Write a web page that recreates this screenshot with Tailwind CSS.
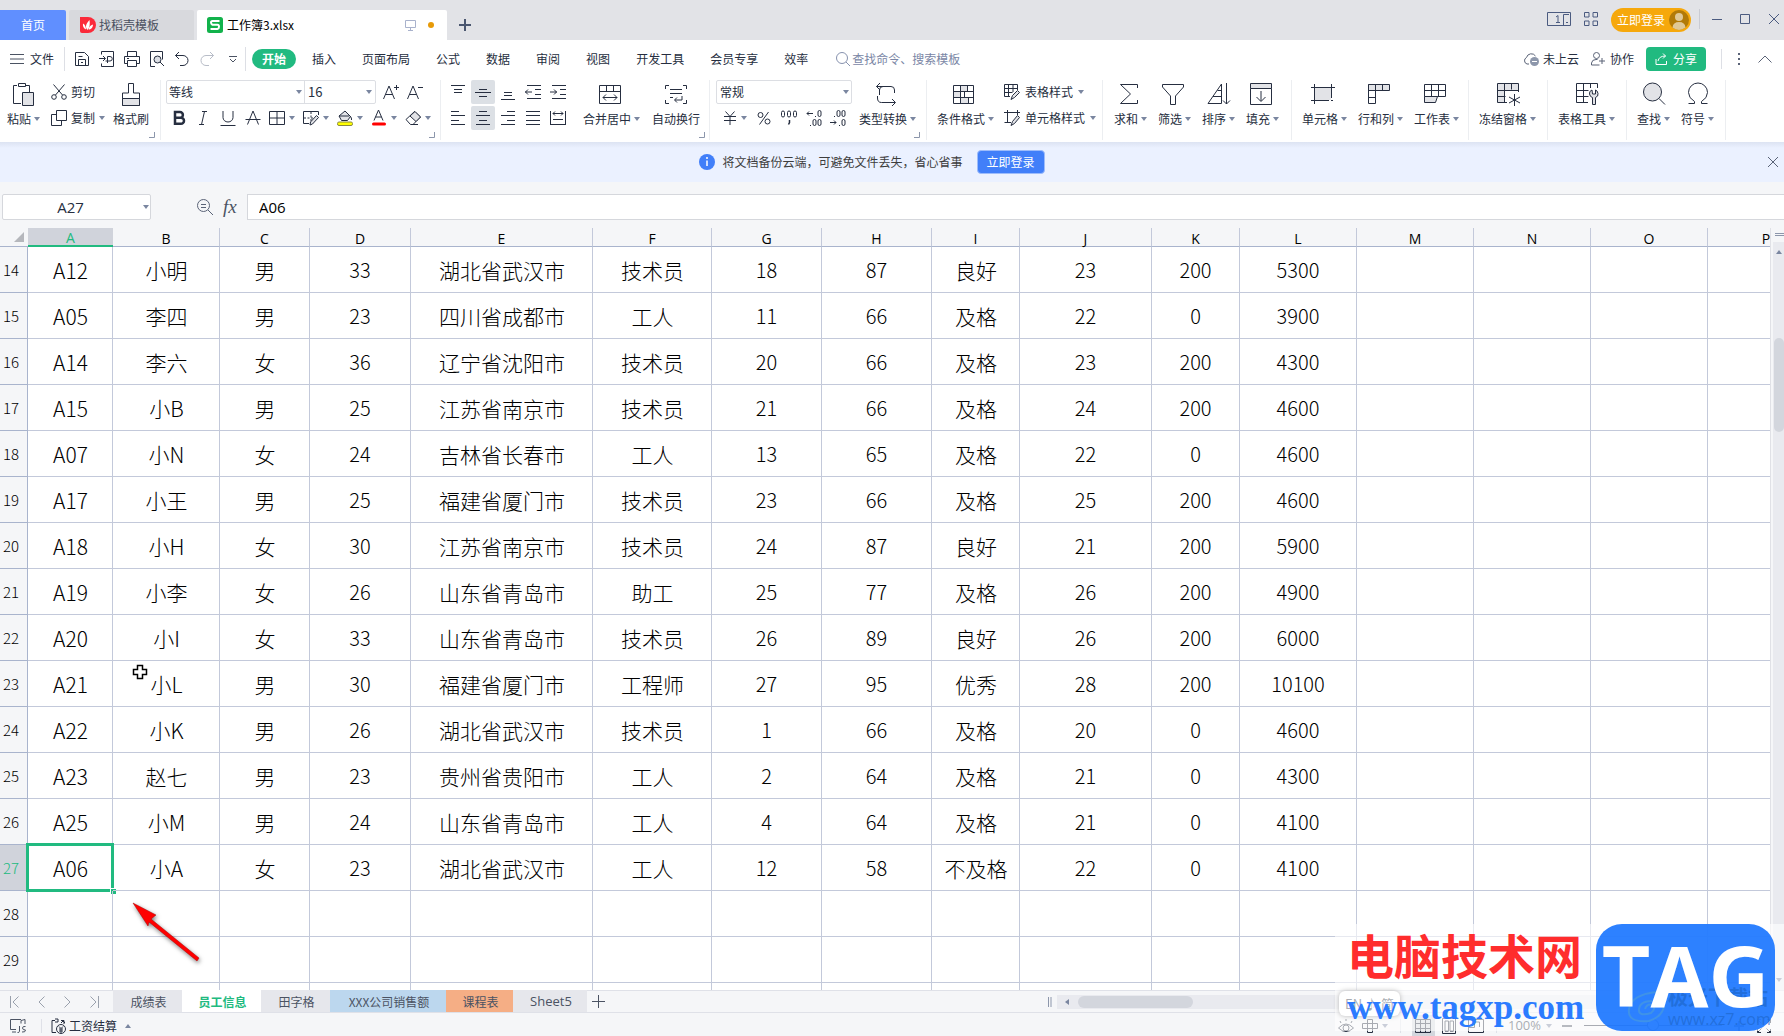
<!DOCTYPE html>
<html lang="zh-CN">
<head>
  <meta charset="UTF-8" />
  <meta name="viewport" content="width=device-width, initial-scale=1.0" />
  <title>工作簿3.xlsx</title>
  <script src="https://cdn.jsdelivr.net/npm/@tailwindcss/browser@4"></script>
</head>
<body class="h-screen overflow-hidden flex flex-col bg-[#f5f6f8] font-['Noto_Sans_CJK_SC',sans-serif] text-xs text-[#262e40]">

  <!-- Shared icons -->
  <svg class="hidden">
    <symbol id="caret" viewBox="0 0 6 4"><path d="M0 0h6L3 4z" fill="#7a86a0" /></symbol>
    <symbol id="corner" viewBox="0 0 6 6"><path d="M5.500 0v5.500H0" fill="none" stroke="#8c96ab" /></symbol>
  </svg>

  <!-- Title bar -->
  <header class="h-10 shrink-0 flex items-end bg-[#e2e3e7]">
    <a href="#" class="w-[66px] h-[30px] flex items-center justify-center rounded-tr-xs bg-[#608fff] text-white">首页</a>
    <a href="#" class="w-[125px] h-[30px] ml-[3px] flex items-center pl-[11px] gap-[3px] rounded-t-xs bg-[#d8d9dd] text-[#4a5060]">
      <svg class="size-4" viewBox="0 0 16 16"><path d="M0 0h8a8 8 0 0 1 0 16H2a2 2 0 0 1-2-2z" fill="#fb2a3a" /><path d="M7.500 13C4.500 10 6.500 6 9.500 3c.5 4 .5 7-2 10zM6 12.500C3.500 11.500 2.500 9 3 6.500c2 1 3 3.500 3 6zM8.500 12.500c2.500 0 4.500-2 4.500-5-2.500.5-4 2.500-4.500 5z" fill="#fff" /></svg>
      找稻壳模板
    </a>
    <a href="#" class="w-[250px] h-[30px] ml-[3px] flex items-center pl-[10px] rounded-t-xs bg-white text-black">
      <svg class="size-4 mr-1" viewBox="0 0 16 16"><rect width="16" height="16" rx="2.500" fill="#12b24b" /><path d="M12.500 4H5.500Q4 4 4 5.500T5.500 7.800h5Q12 7.800 12 9.800T10.500 12H3.500" fill="none" stroke="#fff" stroke-width="2" /></svg>
      <span>工作簿3.xlsx</span>
      <svg class="w-[11px] h-[11px] ml-auto" viewBox="0 0 11 11" fill="none" stroke="#a9b2cc"><path d="M.5.5h10v7H.5zM5.500 7.500v3M3 10.500h5" /></svg>
      <span class="size-[6px] rounded-full bg-[#e79a08] ml-3 mr-[13px]"></span>
    </a>
    <button aria-label="新建" class="h-[30px] ml-3"><svg class="size-3" viewBox="0 0 12 12" stroke="#4b5770" stroke-width="2"><path d="M6 0v12M0 6h12" /></svg></button>
    <div class="ml-auto h-[38px] self-start flex items-center pr-[5px] text-[#4b5b80]">
      <svg class="w-6 h-[14px] mr-[13px]" viewBox="0 0 24 14" fill="none" stroke="currentColor"><path d="M.5.500h23v13H.5zM22 2.500h-5.500v11M19 10.500h2M9 5l2-1.500v7M9 10.500h4" /></svg>
      <svg class="w-[14px] h-[14px] mr-[13px]" viewBox="0 0 14 14" fill="none" stroke="currentColor"><path d="M.5.500h4.500v4.500H.5zM9 .5h4.500v4.500H9zM.5 9h4.500v4.500H.5zM9 9h4.500v4.500H9z" /></svg>
      <button class="h-6 mt-[2px] pl-[6px] pr-[2px] flex items-center gap-1 rounded-full bg-[#f6a80c] text-white">立即登录
        <svg class="size-5" viewBox="0 0 20 20"><circle cx="10" cy="10" r="10" fill="#b27a08" /><circle cx="10" cy="7" r="4" fill="#e0c896" /><path d="M3.500 17.500Q4 12 10 12t6.500 5.500A10 10 0 0 1 3.500 17.500z" fill="#e0c896" /></svg>
      </button>
      <span class="w-px h-5 ml-2 mr-3 bg-[#c9cbd3]"></span>
      <button aria-label="最小化"><svg class="size-[10px]" viewBox="0 0 10 10" stroke="currentColor"><path d="M0 5.500h10" /></svg></button>
      <button aria-label="最大化" class="ml-[18px]"><svg class="size-[10px]" viewBox="0 0 10 10" fill="none" stroke="currentColor"><path d="M.5.500h9v9h-9z" /></svg></button>
      <button aria-label="关闭" class="ml-[19px]"><svg class="size-[10px]" viewBox="0 0 10 10" stroke="currentColor"><path d="M0 0l10 10M10 0L0 10" /></svg></button>
    </div>
  </header>

  <!-- Menu row -->
  <nav class="h-[38px] shrink-0 flex items-center bg-white pl-[10px] pr-3">
    <button class="flex items-center gap-[6px]">
      <svg class="w-[14px] h-[10px]" viewBox="0 0 14 10" stroke="#4b5363"><path d="M0 .5h14M0 5h14M0 9.500h14" /></svg>文件
    </button>
    <span class="w-px h-6 ml-[10px] mr-2 bg-[#dddfe5]"></span>
    <div class="flex items-center gap-[9px] pl-px">
      <svg class="size-4" viewBox="0 0 16 16" fill="none" stroke="#262e40"><path d="M1.500 1.500h9L14.500 5.500v9h-13zM4.500 14.500V8.500h7v6M4.500 5.500h4M7 11.500h2" /></svg>
      <svg class="size-4" viewBox="0 0 16 16" fill="none" stroke="#262e40"><path d="M2.500 3.500v-3h12v15h-12v-3M0 7.500h6M4 5l2.500 2.500L4 10M8.500 12V5.500H11a2 2 0 0 1 0 4.500H6.500" /></svg>
      <svg class="size-4" viewBox="0 0 16 16" fill="none" stroke="#262e40"><path d="M3.500 5V.5h9V5M3.500 12.500h-3v-7h15v7h-3M3.500 9.500h9v6h-9zM3 7.500h2" /></svg>
      <svg class="size-4" viewBox="0 0 16 16" fill="none" stroke="#262e40"><path d="M6 15.500H1.500V.5h12v8" /><circle cx="8.500" cy="8.500" r="3.500" fill="#dcdfe5" /><path d="M11 11l4 4" /></svg>
      <svg class="size-4" viewBox="0 0 16 16" fill="none" stroke="#262e40"><path d="M5 1L1.500 4.500 5 8M1.500 4.500H9a5 5 0 0 1 0 10H6" /></svg>
      <svg class="size-4" viewBox="0 0 16 16" fill="none" stroke="#b8bdc8"><path d="M11 1l3.500 3.500L11 8M14.500 4.500H7a5 5 0 0 0 0 10h3" /></svg>
      <svg class="w-2 h-[7px] ml-[5px]" viewBox="0 0 8 7" fill="none" stroke="#4b5363"><path d="M0 .5h8M1 3l3 3 3-3" /></svg>
    </div>
    <span class="w-px h-6 ml-2 mr-[6px] bg-[#dddfe5]"></span>
    <div class="flex items-center gap-[6px]">
      <a href="#" class="h-5 px-[10px] flex items-center rounded-full bg-[#21ba80] text-white font-bold">开始</a>
      <a href="#" class="px-[10px]">插入</a>
      <a href="#" class="px-[10px]">页面布局</a>
      <a href="#" class="px-[10px]">公式</a>
      <a href="#" class="px-[10px]">数据</a>
      <a href="#" class="px-[10px]">审阅</a>
      <a href="#" class="px-[10px]">视图</a>
      <a href="#" class="px-[10px]">开发工具</a>
      <a href="#" class="px-[10px]">会员专享</a>
      <a href="#" class="px-[10px]">效率</a>
    </div>
    <label class="flex items-center gap-[2px] ml-[18px]">
      <svg class="w-[14px] h-[14px]" viewBox="0 0 14 14" fill="none" stroke="#8792ae"><circle cx="6" cy="6" r="5.500" /><path d="M10 10l4 4" /></svg>
      <input type="text" aria-label="查找命令" placeholder="查找命令、搜索模板" class="w-32 outline-none placeholder:text-[#7a86a5]" />
    </label>
    <div class="ml-auto flex items-center">
      <button class="flex items-center gap-[4px]">
        <svg class="size-4" viewBox="0 0 16 16" fill="none" stroke="#5a6377"><path d="M6 13H4a3.500 3.500 0 0 1-.5-6.500 5 5 0 0 1 9-1.500" /><circle cx="11.500" cy="10.500" r="4.500" fill="#8d97ab" stroke="none" /><path d="M9 10.500h5" stroke="#fff" /></svg>未上云
      </button>
      <button class="flex items-center gap-[5px] ml-3">
        <svg class="w-[14px] h-[14px]" viewBox="0 0 14 14" fill="none" stroke="#5a6377"><circle cx="5.500" cy="3.500" r="3" /><path d="M8.500 13H.5V11Q1 7.500 5 7.500h1.500M11 6v6M8 9h6" /></svg>协作
      </button>
      <button class="h-6 px-[9px] ml-3 flex items-center gap-[6px] rounded bg-[#21ba80] text-white">
        <svg class="w-3 h-3" viewBox="0 0 12 12" fill="none" stroke="#fff"><path d="M1 6v5.500h10.500V8M3 8q1-5 7.500-5M8 .5L10.500 3 8 5.500" /></svg>分享
      </button>
      <span class="w-px h-5 ml-[15px] mr-4 bg-[#dddfe5]"></span>
      <svg class="w-[2px] h-3 mr-[18px]" viewBox="0 0 2 12" fill="#5a6377"><path d="M0 0h2v2H0zM0 5h2v2H0zM0 10h2v2H0z" /></svg>
      <svg class="w-[14px] h-2" viewBox="0 0 14 8" fill="none" stroke="#5a6377"><path d="M.5 7.500L7 1l6.500 6.500" /></svg>
    </div>
  </nav>

  <!-- Ribbon -->
  <section class="h-16 shrink-0 flex bg-white pt-[2px] pb-[2px] leading-4 whitespace-nowrap">
    <div class="relative w-[161px] shrink-0 flex pl-[7px] border-r border-[#eceef1]">
      <button class="w-8 pt-[2px] flex flex-col items-start gap-[5px]">
        <svg class="size-6 ml-1" viewBox="0 0 24 24" fill="none" stroke="#262e40"><path d="M10 21.500H2.500V3.500H6M15 3.500h3.500V10" /><path d="M7.500 1.500h7v3h-7z" /><path d="M11.500 10.500h11v13h-11z" fill="#e2e3e7" /></svg>
        <span class="flex items-center gap-[3px]">粘贴<svg class="w-[6px] h-1"><use href="#caret" /></svg></span>
      </button>
      <div class="flex flex-col gap-[2px] ml-3">
        <button class="h-6 flex items-center gap-[4px]"><svg class="size-4" viewBox="0 0 16 16" fill="none" stroke="#262e40"><path d="M2.500.5l9 10.500M13.500.5l-9 10.500" /><circle cx="3" cy="13" r="2.300" /><circle cx="13" cy="13" r="2.300" /></svg>剪切</button>
        <button class="h-6 flex items-center gap-[4px]"><svg class="size-4" viewBox="0 0 16 16" fill="none" stroke="#262e40"><path d="M5.500.5h10v10h-10zM5 4.500H.5v11h10V11" /></svg>复制<svg class="w-[6px] h-1"><use href="#caret" /></svg></button>
      </div>
      <button class="pt-[2px] ml-[8px] flex flex-col items-center gap-[5px]">
        <svg class="size-6" viewBox="0 0 24 24" fill="none" stroke="#262e40"><path d="M9.500 11V1.500h5V11h6v12.500h-17V11z" /><path d="M3.500 16.500h17v7h-17z" fill="#e2e3e7" /></svg>
        <span>格式刷</span>
      </button>
      <svg class="absolute right-[5px] bottom-[2px] size-[6px]"><use href="#corner" /></svg>
    </div>

    <div class="relative w-[280px] shrink-0 pl-[5px] flex flex-col gap-[2px] border-r border-[#eceef1]">
      <div class="h-6 flex items-center">
        <div class="relative flex h-6 items-center rounded-xs border border-[#dcdee3]">
          <select aria-label="字体" class="w-[138px] h-full appearance-none pl-[2px] border-r border-[#dcdee3]"><option>等线</option></select>
          <select aria-label="字号" class="w-[70px] h-full appearance-none pl-[3px] text-[13px]"><option>16</option></select>
          <svg class="absolute left-[129px] w-[6px] h-1"><use href="#caret" /></svg>
          <svg class="absolute right-[3px] w-[6px] h-1"><use href="#caret" /></svg>
        </div>
        <svg class="size-4 ml-[7px]" viewBox="0 0 16 16" fill="none" stroke="#262e40"><path d="M.5 15L6 2l5.500 13M2.500 10.500h7M11 3.500h5M13.500 1v5" /></svg>
        <svg class="size-4 ml-2" viewBox="0 0 16 16" fill="none" stroke="#262e40"><path d="M.5 15L6 2l5.500 13M2.500 10.500h7M11 3.500h5" /></svg>
      </div>
      <div class="h-6 flex items-center">
        <button aria-label="加粗" class="w-[25px] flex justify-center"><svg class="size-4" viewBox="0 0 16 16" fill="none" stroke="#262e40" stroke-width="2.500"><path d="M4 2h5a2.800 2.800 0 0 1 0 5.800H4zM4 7.800h6a3 3 0 0 1 0 6H4z" /></svg></button>
        <button aria-label="倾斜" class="w-[24px] flex justify-center"><svg class="size-4" viewBox="0 0 16 16" fill="none" stroke="#262e40"><path d="M7 1.500h5M4 14.500h5M9.500 1.500l-3 13" /></svg></button>
        <button aria-label="下划线" class="w-[25px] flex justify-center"><svg class="size-4" viewBox="0 0 16 16" fill="none" stroke="#262e40"><path d="M3 1v6.500a5 4.500 0 0 0 10 0V1M.5 15.500h15" /></svg></button>
        <button aria-label="删除线" class="w-[25px] flex justify-center"><svg class="size-4" viewBox="0 0 16 16" fill="none" stroke="#262e40"><path d="M2.500 14.500L8 1l5.500 13.500M.5 9.500h15" /></svg></button>
        <button aria-label="边框" class="w-[34px] flex items-center gap-[4px] pl-1"><svg class="size-4" viewBox="0 0 16 16" fill="none" stroke="#262e40"><path d="M.5 1.500h15v13H.5zM8 1.500v13M.5 8h15" /></svg><svg class="w-[6px] h-1"><use href="#caret" /></svg></button>
        <button aria-label="绘图边框" class="w-[34px] flex items-center gap-[4px] pl-1"><svg class="size-4" viewBox="0 0 16 16" fill="none" stroke="#262e40"><path d="M6 13.500H.5v-12h15V5" /><path d="M8 2v12M1 8h9" stroke-dasharray="2 1.500" /><path d="M13.500 5.500l2 2-6 6.500-2.500 1 .5-3z" fill="#e2e3e7" /></svg><svg class="w-[6px] h-1"><use href="#caret" /></svg></button>
        <button aria-label="填充颜色" class="w-[34px] flex items-center gap-[4px] pl-1"><svg class="size-4" viewBox="0 0 16 16" fill="none" stroke="#262e40"><path d="M2 6l6-5 5.500 5.500-3 4h-6z" fill="#e2e3e7" /><path d="M2 6h10M13 6q2 2 1.500 4" /><rect x=".5" y="12" width="15" height="3.500" rx="1.500" fill="#ff0" stroke="#8a8a40" /></svg><svg class="w-[6px] h-1"><use href="#caret" /></svg></button>
        <button aria-label="字体颜色" class="w-[34px] flex items-center gap-[4px] pl-1"><svg class="size-4" viewBox="0 0 16 16" fill="none" stroke="#262e40"><path d="M3 10.500L7.500 0 12 10.500M4.500 7h6" /><rect x="1" y="12.500" width="14" height="3" rx="1.500" fill="red" stroke="none" /></svg><svg class="w-[6px] h-1"><use href="#caret" /></svg></button>
        <button aria-label="清除" class="w-[34px] flex items-center gap-[4px] pl-1"><svg class="size-4" viewBox="0 0 16 16" fill="none" stroke="#262e40"><path d="M1 9.500L9.500 1.500l6 5.500L8 14.500H5.500z" /><path d="M5 6l5-4.500 5.500 5.500-4.500 4.500z" fill="#e2e3e7" /><path d="M8 14.500h5" /></svg><svg class="w-[6px] h-1"><use href="#caret" /></svg></button>
      </div>
      <svg class="absolute right-[5px] bottom-[2px] size-[6px]"><use href="#corner" /></svg>
    </div>

    <div class="relative w-[269px] shrink-0 flex pl-[5px] border-r border-[#eceef1]">
      <div class="grid grid-cols-5 gap-x-px gap-y-[2px] content-start">
        <button aria-label="顶端对齐" class="size-6 grid place-items-center"><svg class="size-4" viewBox="0 0 16 16" stroke="#262e40"><path d="M1 1.500h14M4 5.500h8M4 8.500h8" /></svg></button>
        <button aria-label="垂直居中" class="size-6 grid place-items-center rounded-xs bg-[#dce0e5]"><svg class="size-4" viewBox="0 0 16 16" stroke="#262e40"><path d="M4 5.500h8M0 8.500h16M4 12.500h8" /></svg></button>
        <button aria-label="底端对齐" class="size-6 grid place-items-center"><svg class="size-4" viewBox="0 0 16 16" stroke="#262e40"><path d="M4 8.500h8M4 11.500h8M1 15.500h14" /></svg></button>
        <button aria-label="减少缩进" class="size-6 grid place-items-center"><svg class="size-4" viewBox="0 0 16 16" fill="none" stroke="#262e40"><path d="M2 1.500h14M10 5.500h6M10 10.500h6M2 14.500h14M0 8h7M3 5.500L.5 8 3 10.500" /></svg></button>
        <button aria-label="增加缩进" class="size-6 grid place-items-center"><svg class="size-4" viewBox="0 0 16 16" fill="none" stroke="#262e40"><path d="M2 1.500h14M10 5.500h6M10 10.500h6M2 14.500h14M0 8h7M4 5.500L6.500 8 4 10.500" /></svg></button>
        <button aria-label="左对齐" class="size-6 grid place-items-center"><svg class="size-4" viewBox="0 0 16 16" stroke="#262e40"><path d="M1 1.500h8M1 5.500h14M1 10.500h8M1 14.500h14" /></svg></button>
        <button aria-label="水平居中" class="size-6 grid place-items-center rounded-xs bg-[#dce0e5]"><svg class="size-4" viewBox="0 0 16 16" stroke="#262e40"><path d="M4 1.500h8M1 5.500h14M4 10.500h8M1 14.500h14" /></svg></button>
        <button aria-label="右对齐" class="size-6 grid place-items-center"><svg class="size-4" viewBox="0 0 16 16" stroke="#262e40"><path d="M7 1.500h8M1 5.500h14M7 10.500h8M1 14.500h14" /></svg></button>
        <button aria-label="两端对齐" class="size-6 grid place-items-center"><svg class="size-4" viewBox="0 0 16 16" stroke="#262e40"><path d="M1 1.500h14M1 5.500h14M1 10.500h14M1 14.500h14" /></svg></button>
        <button aria-label="分散对齐" class="size-6 grid place-items-center"><svg class="size-4" viewBox="0 0 16 16" fill="none" stroke="#262e40"><path d="M.5 1v14M15.500 1v14M3 3.500h10M5 1.500l-2 2 2 2M11 1.500l2 2-2 2M3 9.500h10M0 14.500h16" /></svg></button>
      </div>
      <button class="pt-[2px] ml-[13px] flex flex-col items-center gap-[5px]">
        <svg class="size-6 mr-[3px]" viewBox="0 0 24 24" fill="none" stroke="#262e40"><path d="M1.500 3.500h21v18h-21zM1.500 9.500h21M8.500 3.500v6M15.500 3.500v6M5 15.500h14M8 12.500l-3 3 3 3M16 12.500l3 3-3 3" /></svg>
        <span class="flex items-center gap-[3px]">合并居中<svg class="w-[6px] h-1"><use href="#caret" /></svg></span>
      </button>
      <button class="pt-[2px] ml-3 flex flex-col items-center gap-[5px]">
        <svg class="size-6" viewBox="0 0 24 24" fill="none" stroke="#262e40"><path d="M5 3.500H1.500V7M19 3.500h3.500V7M5 21.500H1.500V18M19 21.500h3.500V18M6 7.500h12M6 11.500h12M6 15.500h3M18 14v4h-7M13 15.500L10.500 18l2.500 2.500" /></svg>
        <span>自动换行</span>
      </button>
      <svg class="absolute right-1 bottom-[2px] size-[6px]"><use href="#corner" /></svg>
    </div>

    <div class="relative w-[217px] shrink-0 flex pl-[6px] border-r border-[#eceef1]">
      <div class="flex flex-col gap-[2px]">
        <div class="relative flex items-center">
          <select aria-label="数字格式" class="w-[136px] h-6 appearance-none pl-[3px] rounded-xs border border-[#dcdee3]"><option>常规</option></select>
          <svg class="absolute right-[3px] w-[6px] h-1"><use href="#caret" /></svg>
        </div>
        <div class="h-6 flex items-center pl-[7px]">
          <svg class="w-[14px] h-[14px]" viewBox="0 0 14 14" fill="none" stroke="#262e40"><path d="M2.500.5L7 5.500 11.500.5M1 5.500h12M1 9.500h12M7 5.500V14" /></svg>
          <svg class="w-[6px] h-1 ml-1"><use href="#caret" /></svg>
          <svg class="w-[14px] h-[14px] ml-[10px]" viewBox="0 0 14 14" fill="none" stroke="#262e40"><circle cx="3.500" cy="4" r="2.500" /><circle cx="10.500" cy="10.500" r="2.500" /><path d="M11.500 1l-9 12.500" /></svg>
          <svg class="size-4 ml-[10px]" viewBox="0 0 16 16" fill="none" stroke="#262e40"><rect x=".5" y="1" width="3" height="6" rx="1.500" /><rect x="6.500" y="1" width="3" height="6" rx="1.500" /><rect x="12.500" y="1" width="3" height="6" rx="1.500" /><path d="M8.500 10v2.500l-1 2" stroke-width="1.500" /></svg>
          <svg class="size-4 ml-[9px]" viewBox="0 0 16 16" fill="none" stroke="#262e40"><path d="M1 3.500h6M3 1.500l-2 2 2 2M9 6.500h1M4 15.500h1" /><rect x="12" y=".5" width="3" height="6" rx="1.500" /><rect x="7" y="9.500" width="3" height="6" rx="1.500" /><rect x="12" y="9.500" width="3" height="6" rx="1.500" /></svg>
          <svg class="size-4 ml-2" viewBox="0 0 16 16" fill="none" stroke="#262e40"><path d="M0 12.500h6M4 10.500l2 2-2 2M4 6.500h1M9 15.500h1" /><rect x="7" y=".5" width="3" height="6" rx="1.500" /><rect x="12" y=".5" width="3" height="6" rx="1.500" /><rect x="12" y="9.500" width="3" height="6" rx="1.500" /></svg>
        </div>
      </div>
      <button class="pt-[2px] ml-[7px] flex flex-col items-center gap-[5px]">
        <svg class="size-6 mr-[3px]" viewBox="0 0 24 24" fill="none" stroke="#262e40"><path d="M5.500 13V8q0-3.500 3.500-3.500h8q3.500 0 3.500 3.500v3M6 1L2.500 4.500 6 8M2.500 4.500H9M3.500 14v2q0 4.500 4 4.500h13.500M18 17l3.500 3.500L18 24" /></svg>
        <span class="flex items-center gap-[3px]">类型转换<svg class="w-[6px] h-1"><use href="#caret" /></svg></span>
      </button>
      <svg class="absolute right-[6px] bottom-[2px] size-[6px]"><use href="#corner" /></svg>
    </div>

    <div class="w-[176px] shrink-0 flex pl-[10px] border-r border-[#eceef1]">
      <button class="pt-[2px] flex flex-col items-center gap-[5px]">
        <svg class="size-6 mr-[3px]" viewBox="0 0 24 24" fill="none" stroke="#262e40"><path d="M8 3h7v6H8zM2 9h7v6H2zM9 15h7v6H9z" fill="#e2e3e7" stroke="none" /><path d="M1.500 3.500h20v18h-20zM1.500 9.500h20M1.500 15.500h20M8.500 3.500v18M15.500 3.500v6M12.500 9.500v6M16.500 15.500v6" /></svg>
        <span class="flex items-center gap-[3px]">条件格式<svg class="w-[6px] h-1"><use href="#caret" /></svg></span>
      </button>
      <div class="flex flex-col gap-[2px] ml-[10px]">
        <button class="h-6 flex items-center gap-[5px]"><svg class="size-4" viewBox="0 0 16 16" fill="none" stroke="#262e40"><path d="M6 12.500H.5v-12h13V6M.5 4.500h13M.5 8.500h8M4.500.5v12M9 .5V8" /><path d="M13.500 6.500l2 2-5 5-3.500 2 1.500-4z" fill="#e2e3e7" /></svg>表格样式<svg class="w-[6px] h-1"><use href="#caret" /></svg></button>
        <button class="h-6 flex items-center gap-[5px]"><svg class="size-4" viewBox="0 0 16 16" fill="none" stroke="#262e40"><path d="M0 2.500h16M3.500 0v13M13.500 0v5M.5 12.500H7" /><path d="M13.500 5.500l2 2-5 6-3.500 2 1.500-4z" fill="#e2e3e7" /></svg>单元格样式<svg class="w-[6px] h-1"><use href="#caret" /></svg></button>
      </div>
    </div>

    <div class="w-[189px] shrink-0 flex gap-[11px] px-[11px] border-r border-[#eceef1]">
      <button class="pt-[2px] flex flex-col items-center gap-[5px]">
        <svg class="size-6 mr-[3px]" viewBox="0 0 24 24" fill="none" stroke="#262e40"><path d="M20.500 6V2.500h-17L13.500 12l-10 9.500h17V18" /></svg>
        <span class="flex items-center gap-[3px]">求和<svg class="w-[6px] h-1"><use href="#caret" /></svg></span>
      </button>
      <button class="pt-[2px] flex flex-col items-center gap-[5px]">
        <svg class="size-6 mr-[3px]" viewBox="0 0 24 24" fill="none" stroke="#262e40"><path d="M1.500 2.500h21v2.500L14.500 14v8.500h-5V14L1.500 5z" /></svg>
        <span class="flex items-center gap-[3px]">筛选<svg class="w-[6px] h-1"><use href="#caret" /></svg></span>
      </button>
      <button class="pt-[2px] flex flex-col items-center gap-[5px]">
        <svg class="size-6" viewBox="0 0 24 24" fill="none" stroke="#262e40"><path d="M1 21.500L14.500 2v19.500zM10.500 8.500h4M6 14.500h8.500M19.500 1v21M16 18.500l3.500 3.500 3.500-3.500" /></svg>
        <span class="flex items-center gap-[3px]">排序<svg class="w-[6px] h-1"><use href="#caret" /></svg></span>
      </button>
      <button class="pt-[2px] flex flex-col items-center gap-[5px]">
        <svg class="size-6 mr-[3px]" viewBox="0 0 24 24" fill="none" stroke="#262e40"><path d="M1.500 1.500h21v5h-21z" fill="#e2e3e7" /><path d="M1.500 6.500v16h21v-16M12 9v10M7.500 15l4.500 4.500 4.500-4.500" /></svg>
        <span class="flex items-center gap-[3px]">填充<svg class="w-[6px] h-1"><use href="#caret" /></svg></span>
      </button>
    </div>

    <div class="w-[177px] shrink-0 flex gap-[11px] px-[10px] border-r border-[#eceef1]">
      <button class="pt-[2px] flex flex-col items-center gap-[5px]">
        <svg class="size-6 mr-[3px]" viewBox="0 0 24 24" fill="none" stroke="#262e40"><path d="M4 6h16v12H4z" fill="#e2e3e7" stroke="none" /><path d="M0 5.500h24M3.500 2v20M20.500 2v14M0 18.500h18M20 18.500h2" /></svg>
        <span class="flex items-center gap-[3px]">单元格<svg class="w-[6px] h-1"><use href="#caret" /></svg></span>
      </button>
      <button class="pt-[2px] flex flex-col items-center gap-[5px]">
        <svg class="size-6 mr-[3px]" viewBox="0 0 24 24" fill="none" stroke="#262e40"><path d="M1.500 2.500h21v6h-21z" fill="#e2e3e7" /><path d="M8.500 2.500v19h-7v-19M15.500 2.500v6M1.500 15.500h7" /></svg>
        <span class="flex items-center gap-[3px]">行和列<svg class="w-[6px] h-1"><use href="#caret" /></svg></span>
      </button>
      <button class="pt-[2px] flex flex-col items-center gap-[5px]">
        <svg class="size-6 mr-[3px]" viewBox="0 0 24 24" fill="none" stroke="#262e40"><path d="M1.500 2.500h21v12h-21zM1.500 8.500h21M8.500 2.500v12M15.500 2.500v12" /><path d="M1.500 14.500h13l-2 6h-11z" fill="#e2e3e7" /></svg>
        <span class="flex items-center gap-[3px]">工作表<svg class="w-[6px] h-1"><use href="#caret" /></svg></span>
      </button>
    </div>

    <div class="w-[79px] shrink-0 flex pl-[10px] border-r border-[#eceef1]">
      <button class="pt-[2px] flex flex-col items-center gap-[5px]">
        <svg class="size-6" viewBox="0 0 24 24" fill="none" stroke="#262e40"><path d="M2 2h20v6H8v12H2z" fill="#e2e3e7" stroke="none" /><path d="M11 20.500H1.500v-19h21V10M1.500 8.500h21M1.500 14.500h8M8.500 1.500v19M15.500 1.500v6M18.500 12v12M13 15l11 6M24 15l-11 6" /></svg>
        <span class="flex items-center gap-[3px]">冻结窗格<svg class="w-[6px] h-1"><use href="#caret" /></svg></span>
      </button>
    </div>

    <div class="w-[79px] shrink-0 flex pl-[10px] border-r border-[#eceef1]">
      <button class="pt-[2px] flex flex-col items-center gap-[5px]">
        <svg class="size-6" viewBox="0 0 24 24" fill="none" stroke="#262e40"><path d="M13 20.500H1.500v-19h21V6M1.500 8.500h12M1.500 14.500h12M8.500 1.500v19M15.500 1.500V6" /><path d="M17 8q-3 1-2.500 4t3 3.500v7h3v-7q3-1 2.500-4T20.500 8v4h-3z" fill="#e2e3e7" /></svg>
        <span class="flex items-center gap-[3px]">表格工具<svg class="w-[6px] h-1"><use href="#caret" /></svg></span>
      </button>
    </div>

    <div class="w-[99px] shrink-0 flex gap-[11px] pl-[10px] border-r border-[#eceef1]">
      <button class="pt-[2px] flex flex-col items-center gap-[5px]">
        <svg class="size-6" viewBox="0 0 24 24" fill="none" stroke="#262e40"><circle cx="10.500" cy="10" r="9" fill="#e2e3e7" /><path d="M17 16.500l6 6" /></svg>
        <span class="flex items-center gap-[3px]">查找<svg class="w-[6px] h-1"><use href="#caret" /></svg></span>
      </button>
      <button class="pt-[2px] flex flex-col items-center gap-[5px]">
        <svg class="size-6" viewBox="0 0 24 24" fill="none" stroke="#262e40"><path d="M2.500 21.500h6v-2Q2.500 16 2.500 10.500a9.500 9.500 0 0 1 19 0q0 5.500-6 9v2h6" /></svg>
        <span class="flex items-center gap-[3px]">符号<svg class="w-[6px] h-1"><use href="#caret" /></svg></span>
      </button>
    </div>
  </section>

  <!-- Backup banner -->
  <section class="relative h-10 shrink-0 flex items-center justify-center pr-10 bg-linear-to-b from-[#dce3f2] from-0% to-[#ebf1ff] to-15% text-[#3d3d3d]">
    <svg class="size-4 mr-[7px]" viewBox="0 0 16 16"><circle cx="8" cy="8" r="8" fill="#417ff9" /><path d="M8 3v2M8 6.500V12" stroke="#fff" stroke-width="1.500" /></svg>
    <span>将文档备份云端，可避免文件丢失，省心省事</span>
    <button class="h-6 px-[9px] ml-[14px] rounded border border-[#9dbcfb] bg-[#417ff9] text-white">立即登录</button>
    <button aria-label="关闭提示" class="absolute right-[6px]"><svg class="size-[10px]" viewBox="0 0 10 10" stroke="#5a6377"><path d="M0 0l10 10M10 0L0 10" /></svg></button>
  </section>

  <!-- Formula bar -->
  <section class="h-[46px] shrink-0 flex items-center pl-[2px] pt-1 font-['Open_Sans',sans-serif] text-[15px]">
    <div class="relative flex items-center">
      <input aria-label="名称框" value="A27" class="w-[149px] h-[26px] pr-3 text-center rounded-xs border border-[#d5d7dc] bg-white outline-none" />
      <svg class="absolute right-[2px] w-[6px] h-1"><use href="#caret" /></svg>
    </div>
    <svg class="size-4 ml-[46px]" viewBox="0 0 16 16" fill="none" stroke="#5a6377"><circle cx="6.500" cy="6.500" r="6" /><path d="M11 11l5 5M4 5.500h5M4 8.500h5" /></svg>
    <span class="w-[34px] pl-[10px] font-['Liberation_Serif',serif] italic text-[19px] text-[#4b5363]">fx</span>
    <input aria-label="编辑栏" value="A06" class="flex-1 h-[26px] pl-[11px] border border-r-0 border-[#d5d7dc] bg-white text-black outline-none" />
  </section>

  <!-- Sheet -->
  <main class="relative flex-1 min-h-0 flex overflow-hidden">
    <div class="flex-1 min-w-0 overflow-hidden bg-white border-r border-[#e0e1e6]">
      <table class="w-[1825px] table-fixed border-separate border-spacing-0 text-center text-black">
        <colgroup>
          <col class="w-[28px]" /><col class="w-[85px]" /><col class="w-[107px]" /><col class="w-[90px]" /><col class="w-[101px]" /><col class="w-[182px]" /><col class="w-[119px]" /><col class="w-[110px]" /><col class="w-[110px]" /><col class="w-[88px]" /><col class="w-[132px]" /><col class="w-[88px]" /><col class="w-[117px]" /><col class="w-[117px]" /><col class="w-[117px]" /><col class="w-[117px]" /><col class="w-[117px]" />
        </colgroup>
        <thead><tr id="columns"></tr></thead>
        <tbody id="rows"></tbody>
      </table>
    </div>
    <div class="w-[13px] flex flex-col items-end">
      <svg class="w-[10px] h-[14px]" viewBox="0 0 10 14" stroke="#8c96ab"><path d="M1 5.500h9M1 7.500h9" /></svg>
      <div class="w-[11px] flex-1 flex flex-col items-center bg-[#e9eaef] pt-2 pb-2 pl-px">
        <svg class="w-[6px] h-1 rotate-180"><use href="#caret" /></svg>
        <span class="w-[10px] h-[94px] mt-[84px] rounded-full bg-[#d3d6dd]"></span>
        <svg class="w-[6px] h-1 mt-auto"><use href="#caret" /></svg>
      </div>
    </div>

    <!-- Mouse pointer and pointing arrow -->
    <svg class="absolute left-[132px] top-[436px] size-4" viewBox="0 0 16 16"><path d="M5.500 1.500h5v4h4v5h-4v4h-5v-4h-4v-5h4z" fill="#fff" stroke="#000" stroke-width="1.500" /></svg>
    <svg class="absolute left-[128px] top-[671px] w-[80px] h-[70px] drop-shadow-[1px_2px_2px_rgba(0,0,0,0.5)]" viewBox="0 0 80 70"><path d="M5 4l23 12-5 4 48 39-2 3-48-39-1 4z" fill="#f00" stroke="#a00" stroke-width=".5" /></svg>
  </main>

  <!-- Sheet tabs -->
  <footer class="relative shrink-0">
    <div class="h-[23px] flex items-stretch border-b border-[#dfe1e8] text-[#4b5363]">
      <div class="w-[113px] flex items-center gap-[19px] pl-[10px] border-t border-[#dfe1e8]">
        <svg class="w-[9px] h-3" viewBox="0 0 9 12" fill="none" stroke="#9aa1ad"><path d="M.5 0v12M8.500.5L3 6l5.500 5.500" /></svg>
        <svg class="w-[7px] h-3" viewBox="0 0 7 12" fill="none" stroke="#9aa1ad"><path d="M6.500.5L1 6l5.500 5.500" /></svg>
        <svg class="w-[7px] h-3" viewBox="0 0 7 12" fill="none" stroke="#9aa1ad"><path d="M.5.500L6 6 .5 11.500" /></svg>
        <svg class="w-[9px] h-3" viewBox="0 0 9 12" fill="none" stroke="#9aa1ad"><path d="M8.500 0v12M.5.500L6 6 .5 11.500" /></svg>
      </div>
      <button class="w-[69px] pt-[2px] pl-[2px] bg-[#e6e7ec]">成绩表</button>
      <button class="w-[79px] pt-[2px] pl-[2px] bg-white font-bold text-[#21ba80]">员工信息</button>
      <button class="w-[69px] pt-[2px] pl-[2px] bg-[#e6e7ec]">田字格</button>
      <button class="w-[116px] pt-[2px] pl-[2px] bg-[#bcd7ee]">XXX公司销售额</button>
      <button class="w-[67px] pt-[2px] pl-[2px] bg-[#f5ae85]">课程表</button>
      <button class="w-[74px] pt-[2px] pl-[2px] bg-[#e6e7ec] font-['Open_Sans',sans-serif] text-[13px]">Sheet5</button>
      <button aria-label="新建工作表" class="pl-[5px] border-t border-[#dfe1e8]"><svg class="w-[13px] h-[13px]" viewBox="0 0 13 13" stroke="#4b5363"><path d="M6.500 0v13M0 6.500h13" /></svg></button>
      <div class="flex-1 flex justify-end border-t border-[#dfe1e8]">
        <div class="w-[736px] flex items-center">
          <svg class="w-1 h-[10px]" viewBox="0 0 4 10" stroke="#8c96ab"><path d="M.5 0v10M3 0v10" /></svg>
          <div class="flex-1 h-[14px] ml-[5px] mr-[11px] pl-[7px] flex items-center bg-[#e9eaef]">
            <svg class="w-[6px] h-1 rotate-90"><use href="#caret" /></svg>
            <span class="w-[115px] h-3 ml-2 rounded-full bg-[#d3d6dd]"></span>
          </div>
        </div>
      </div>
    </div>

    <!-- Status bar -->
    <div class="h-[23px] flex items-center pt-[2px] pl-[10px] pr-[13px]">
      <svg class="w-4 h-[14px]" viewBox="0 0 16 14" fill="none" stroke="#4b5363"><path d="M6 10.500H.5v-10H11M2 13h4M11 4.500V1.500l4-1V5M9.500 7v5.500q0 1-2 1M15.500 7.500q-3-.5-3 1.500t3 2q0 2.500-3.500 2" /></svg>
      <span class="w-px h-[14px] ml-[15px] mr-[9px] bg-[#dfe1e8]"></span>
      <button class="flex items-center gap-[2px] leading-4">
        <svg class="size-4" viewBox="0 0 16 16" fill="none" stroke="#262e40"><path d="M5 14.500H1v-12h3M10 2.500h3V6M4 1h3v3H4M10 5l2-2 2 2" /><circle cx="10" cy="11" r="4.500" /><path d="M8 8.500l2 2 2-2M8 11h4M8 13h4M10 11v4" /></svg>工资结算
        <svg class="w-[6px] h-1 ml-[6px] rotate-180"><use href="#caret" /></svg>
      </button>
      <div class="ml-auto flex items-center text-[#262e40]">
        <svg class="size-4" viewBox="0 0 16 16" fill="none" stroke="currentColor"><path d="M.5 10Q8 2 15.500 10 8 17 .5 10z" /><circle cx="8" cy="10" r="3" /><path d="M2 3l1 2M8 1v2M14 3l-1 2" /></svg>
        <svg class="size-4 ml-2" viewBox="0 0 16 16" fill="none" stroke="currentColor"><path d="M5.500 1.500h5v13h-5zM.5 5.500h15v5H.5z" /></svg>
        <svg class="w-[6px] h-1 ml-[4px]"><use href="#caret" /></svg>
        <span class="w-px h-[14px] ml-3 mr-[11px] bg-[#dfe1e8]"></span>
        <span class="w-[23px] h-[21px] grid place-items-center bg-[#d3d6dd]"><svg class="size-4" viewBox="0 0 16 16" fill="none" stroke="currentColor"><path d="M.5 1.500h15v13H.5zM.5 5.500h15M.5 10.500h15M5.500 1.500v13M10.500 1.500v13" /></svg></span>
        <svg class="w-[14px] h-4 ml-[7px]" viewBox="0 0 14 16" fill="none" stroke="currentColor"><path d="M.5.500h13v15H.5zM3 3h3.500v10H3zM8 3h3.500v10H8z" /></svg>
        <svg class="size-4 ml-3" viewBox="0 0 16 16" fill="none" stroke="currentColor"><path d="M.5 1.500h15v13H.5zM.5 9.500h6v-8M6.500 4h5v5" /></svg>
        <span class="w-px h-[14px] ml-3 mr-[11px] bg-[#dfe1e8]"></span>
        <span class="font-['Open_Sans',sans-serif] text-[13px]">100%</span>
        <svg class="w-[6px] h-1 ml-[5px]"><use href="#caret" /></svg>
        <svg class="w-[10px] h-[2px] ml-[10px]" viewBox="0 0 10 2" fill="#4b5363"><path d="M0 0h10v2H0z" /></svg>
        <input type="range" aria-label="缩放" value="50" class="w-[138px] h-3 mx-3 appearance-none bg-transparent [&::-webkit-slider-runnable-track]:h-px [&::-webkit-slider-runnable-track]:bg-[#262e40] [&::-webkit-slider-thumb]:appearance-none [&::-webkit-slider-thumb]:size-3 [&::-webkit-slider-thumb]:-mt-[6px] [&::-webkit-slider-thumb]:rounded-full [&::-webkit-slider-thumb]:border [&::-webkit-slider-thumb]:border-[#262e40] [&::-webkit-slider-thumb]:bg-white" />
        <svg class="size-[10px] mr-[13px]" viewBox="0 0 10 10" stroke="#262e40" stroke-width="2"><path d="M5 0v10M0 5h10" /></svg>
        <svg class="w-[14px] h-[14px]" viewBox="0 0 14 14" fill="none" stroke="currentColor"><path d="M.5 4V.5H4M10 .5h3.500V4M.5 10v3.500H4M10 13.500h3.500V10M.5.500l4 4M13.500.5l-4 4M.5 13.500l4-4M13.500 13.500l-4-4" /></svg>
      </div>
    </div>

    <!-- Input method bubble -->
    <div class="absolute right-[384px] bottom-5 w-[61px] h-[25px] flex items-center justify-center rounded-md bg-white shadow-[0_0_5px_rgba(0,0,0,0.7)] text-[13px]">EN ♪ 简</div>

    <!-- Site badge -->
    <div class="absolute right-0 bottom-[5px] w-[449px] h-[107px] flex bg-white/60">
      <div class="w-[261px] pl-3 whitespace-nowrap">
        <p class="h-[60px] leading-[60px] text-[47px] font-bold text-[#ff2d2d]">电脑技术网</p>
        <p class="pt-1 leading-[40px] font-['Liberation_Serif',serif] text-[35px] font-bold text-[#2b7bff]">www.tagxp.com</p>
      </div>
      <div class="relative w-[179px] flex justify-center rounded-[26px] bg-[#1673ff]/90 text-white">
        <div class="absolute left-[30px] top-[61px] flex items-center text-[#1d67cc]/70">
          <svg class="w-[42px] h-9" viewBox="0 0 42 36" fill="none" stroke="#3f92e8" stroke-width="2"><path d="M30 3Q5 6 3 20t20 12Q36 28 38 17M26 12q-12 0-13 8t12 4q5-4 2-8-6-2-8 4" /></svg>
          <div class="whitespace-nowrap">
            <p class="text-[20px] leading-6 font-bold">极光下载站</p>
            <p class="text-[16px] leading-5 font-['Open_Sans',sans-serif]">www.xz7.com</p>
          </div>
        </div>
        <span class="relative leading-[102px] font-['Open_Sans',sans-serif] text-[84px] font-bold">TAG</span>
      </div>
    </div>
  </footer>

  <script>
    const columns = ["A", "B", "C", "D", "E", "F", "G", "H", "I", "J", "K", "L", "M", "N", "O", "P"];

    const staff = [
      ["A12", "小明", "男", 33, "湖北省武汉市", "技术员", 18, 87, "良好", 23, 200, 5300],
      ["A05", "李四", "男", 23, "四川省成都市", "工人", 11, 66, "及格", 22, 0, 3900],
      ["A14", "李六", "女", 36, "辽宁省沈阳市", "技术员", 20, 66, "及格", 23, 200, 4300],
      ["A15", "小B", "男", 25, "江苏省南京市", "技术员", 21, 66, "及格", 24, 200, 4600],
      ["A07", "小N", "女", 24, "吉林省长春市", "工人", 13, 65, "及格", 22, 0, 4600],
      ["A17", "小王", "男", 25, "福建省厦门市", "技术员", 23, 66, "及格", 25, 200, 4600],
      ["A18", "小H", "女", 30, "江苏省南京市", "技术员", 24, 87, "良好", 21, 200, 5900],
      ["A19", "小李", "女", 26, "山东省青岛市", "助工", 25, 77, "及格", 26, 200, 4900],
      ["A20", "小I", "女", 33, "山东省青岛市", "技术员", 26, 89, "良好", 26, 200, 6000],
      ["A21", "小L", "男", 30, "福建省厦门市", "工程师", 27, 95, "优秀", 28, 200, 10100],
      ["A22", "小K", "男", 26, "湖北省武汉市", "技术员", 1, 66, "及格", 20, 0, 4600],
      ["A23", "赵七", "男", 23, "贵州省贵阳市", "工人", 2, 64, "及格", 21, 0, 4300],
      ["A25", "小M", "男", 24, "山东省青岛市", "工人", 4, 64, "及格", 21, 0, 4100],
      ["A06", "小A", "女", 23, "湖北省武汉市", "工人", 12, 58, "不及格", 22, 0, 4100],
      [], [], []
    ];

    // Column letters, with the select-all triangle in the corner
    document.getElementById("columns").innerHTML =
      `<th class="h-[19px] p-0 border-b border-[#a9b4cd] bg-[#f5f6f8]"><svg class="size-[10px] ml-[14px]" viewBox="0 0 10 10"><path d="M10 0v10H0z" fill="#b5b7bc" /></svg></th>` +
      columns.map((c, i) => i === 0
        ? `<th class="h-[19px] p-0 pt-[2px] border-b-2 border-[#21ba80] bg-[#d0d3db] font-normal font-['Open_Sans',sans-serif] text-sm leading-[15px] text-[#21ba80]">${c}</th>`
        : `<th class="h-[19px] p-0 pt-[2px] border-b border-r border-b-[#a9b4cd] border-r-[#c3c9da] bg-[#f5f6f8] font-normal font-['Open_Sans',sans-serif] text-sm leading-[15px]">${c}</th>`
      ).join("");

    document.getElementById("rows").innerHTML = staff.map((row, r) => {
      const n = r + 14;
      const head = n === 27
        ? `<th class="h-[46px] p-0 pr-[5px] border-b border-r border-[#a9b4cd] bg-[#d0d3db] font-light text-[15px] text-[#21ba80]">${n}</th>`
        : `<th class="h-[46px] p-0 pr-[5px] border-b border-r border-[#a9b4cd] bg-[#f5f6f8] font-light text-[15px]">${n}</th>`;
      return "<tr>" + head + columns.map((c, i) => {
        const value = row[i] ?? "";
        // The active cell gets its frame and fill handle
        const frame = n === 27 && i === 0
          ? `<span class="absolute -inset-[2px] border-[3px] border-[#21ba80]"></span><span class="absolute -right-[4px] -bottom-[4px] size-[6px] border-t border-l border-white bg-[#21ba80]"></span>`
          : "";
        return typeof value === "number"
          ? `<td class="p-0 border-b border-r border-[#c3c9da] text-[20px] font-light leading-6">${value}</td>`
          : `<td class="relative p-0 pl-px border-b border-r border-[#c3c9da] text-[21px] font-light leading-6">${value}${frame}</td>`;
      }).join("") + "</tr>";
    }).join("");
  </script>

</body>
</html>
